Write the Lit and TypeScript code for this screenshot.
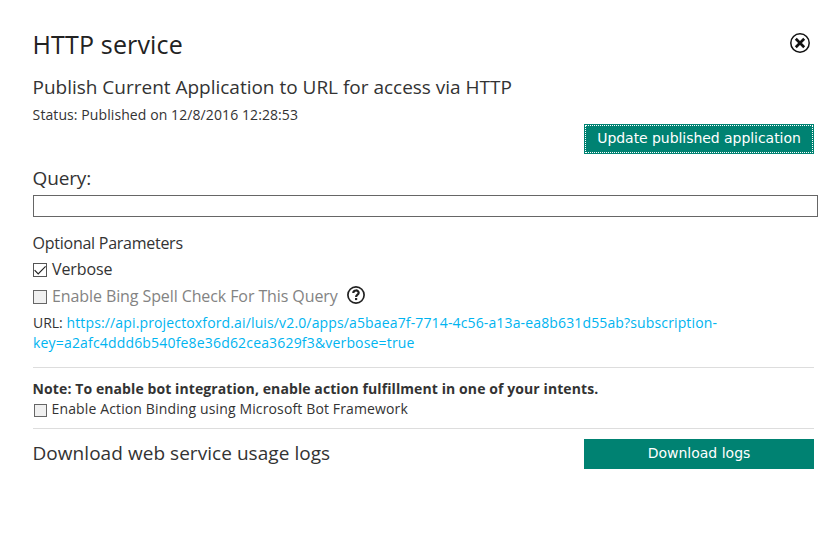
import { LitElement, html, css, nothing } from "lit";
import { customElement, property } from "lit/decorators.js";

@customElement("check-option")
export class CheckOption extends LitElement {
  @property({ type: Boolean }) checked = false;
  @property({ type: Boolean, reflect: true }) small = false;

  static styles = css`
    :host { display: flex; align-items: flex-start; line-height: 24px; font-size: 16px; }
    .box {
      box-sizing: border-box; flex: none; width: 14px; height: 14px; margin: 6px 5px 0 0;
      border: 1px solid #666; background: #f0f0f0;
    }
    .box.checked { background: #fff; border-color: #555; }
    .tick { display: block; width: 12px; height: 12px; }
    :host([small]) { line-height: 20px; font-size: 14px; }
    :host([small]) .box { width: 13px; height: 13px; margin: 5px 4.5px 0 1px; }
  `;

  render() {
    return html`
      <span class="box ${this.checked ? "checked" : ""}" role="checkbox" aria-checked=${this.checked}>
        ${this.checked
          ? html`<svg class="tick" viewBox="0 0 12 12" fill="none" stroke="#222" stroke-width="1.2">
              <path d="M0.6 6.2 4.2 9.8 11.6 2.4" />
            </svg>`
          : nothing}
      </span>
      <slot></slot>
    `;
  }
}

@customElement("app-root")
export class AppRoot extends LitElement {
  static styles = css`
    :host {
      display: block; box-sizing: border-box; height: 552px; padding: 27px 21px 0 33px;
      background: #fff; color: #333; font-family: "Open Sans", "Noto Sans", sans-serif;
    }
    .header { display: flex; justify-content: space-between; height: 34px; }
    h1 { margin: 0 0 0 -0.5px; font-weight: 400; font-size: 25px; line-height: 34px; letter-spacing: 0.16px; color: #222; }
    h2 { margin: 0; font-weight: 400; font-size: 19px; line-height: 26px; white-space: nowrap; }
    .close { display: block; width: 20px; height: 20px; margin: 6px 4px 0 0; }
    h2.lead { margin: 13px 0 0 -0.5px; letter-spacing: -0.01px; }
    .status { margin: 5px 0 0 -0.4px; font-size: 14px; line-height: 19px; letter-spacing: 0.09px; }
    .actions { display: flex; justify-content: flex-end; }
    .button {
      box-sizing: border-box; flex: none; width: 230px; height: 30px; padding: 0 0 2px; margin: 0;
      border: 0; background: #008272; color: #fff; text-align: center;
      font: 14px/26px "DejaVu Sans", sans-serif; white-space: nowrap;
    }
    .button.focused { outline: 1px dotted #fff; outline-offset: -2px; letter-spacing: -0.05px; }
    h2.query { margin: 11px 0 0 -0.5px; letter-spacing: -0.15px; }
    .field {
      display: block; box-sizing: border-box; width: 785px; height: 22px; margin: 4px 0 0; padding: 0 4px;
      border: 1px solid #666; border-radius: 0; background: #fff;
    }
    .optional { margin: 14px 0 0 -0.4px; font-size: 16px; line-height: 24px; letter-spacing: -0.26px; }
    .verbose { margin-top: 2px; letter-spacing: -0.1px; }
    .spell { margin-top: 3px; letter-spacing: -0.095px; color: #838383; }
    .help { display: block; width: 18px; height: 18px; margin: 2px 0 0 9px; }
    .url { margin-top: 5px; font-size: 14px; line-height: 20px; letter-spacing: 0.14px; white-space: nowrap; }
    .url .label { letter-spacing: -0.03px; }
    .url .tail { letter-spacing: 0.175px; }
    .url a { color: #00b4f0; text-decoration: none; }
    .rule { height: 1px; margin: 14px 0 0; border: 0; background: #ddd; }
    .note { margin: 11px 0 0 -0.4px; font-size: 14px; line-height: 20px; font-weight: 700; letter-spacing: 0.093px; }
    .binding { letter-spacing: 0.135px; }
    .rule.second { margin-top: 9px; }
    .logs { display: flex; justify-content: space-between; margin-top: 10px; }
    .logs h2 { margin: 1px 0 0 -0.5px; letter-spacing: 0.05px; }
  `;

  render() {
    return html`
      <div class="header">
        <h1>HTTP service</h1>
        <svg class="close" viewBox="0 0 20 20" fill="none" stroke="#111">
          <circle cx="10" cy="10" r="9.2" stroke-width="1.5" />
          <path d="M5.8 5.8 14.2 14.2M14.2 5.8 5.8 14.2" stroke-width="2.7" />
        </svg>
      </div>
      <h2 class="lead">Publish Current Application to URL for access via HTTP</h2>
      <div class="status">Status: Published on 12/8/2016 12:28:53</div>
      <div class="actions"><button class="button focused">Update published application</button></div>
      <h2 class="query">Query:</h2>
      <input class="field" type="text" aria-label="Query" />
      <div class="optional">Optional Parameters</div>
      <check-option class="verbose" checked>Verbose</check-option>
      <check-option class="spell">
        Enable Bing Spell Check For This Query
        <svg class="help" viewBox="0 0 18 18" fill="none" stroke="#222">
          <circle cx="9" cy="9" r="8.1" stroke-width="1.7" />
          <path d="M6.3 7.1C6.3 3.6 11.7 3.7 11.7 6.8 11.7 8.7 9.1 8.6 9.1 10.9" stroke-width="2.2" />
          <path d="M9.1 12v2.1" stroke-width="2.2" />
        </svg>
      </check-option>
      <div class="url">
        <span class="label">URL:</span>
        <a>https://api.projectoxford.ai/luis/v2.0/apps/a5baea7f-7714-4c56-a13a-ea8b631d55ab?subscription-<br /><span class="tail">key=a2afc4ddd6b540fe8e36d62cea3629f3&amp;verbose=true</span></a>
      </div>
      <hr class="rule" />
      <div class="note">Note: To enable bot integration, enable action fulfillment in one of your intents.</div>
      <check-option class="binding" small>Enable Action Binding using Microsoft Bot Framework</check-option>
      <hr class="rule second" />
      <div class="logs">
        <h2>Download web service usage logs</h2>
        <button class="button">Download logs</button>
      </div>
    `;
  }
}
